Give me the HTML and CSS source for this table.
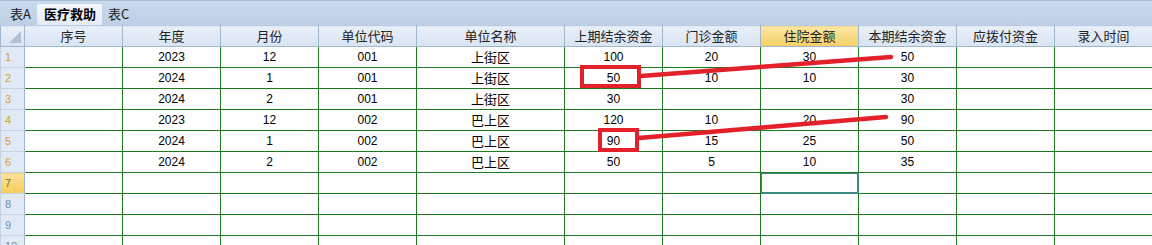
FILE: index.html
```html
<!DOCTYPE html>
<html lang="zh">
<head>
<meta charset="utf-8">
<link rel="stylesheet" href="styles.css">
</head>
<body>
<div class="sheet">
  <div class="tabs">
    <span class="tab">表A</span>
    <span class="tab active">医疗救助</span>
    <span class="tab">表C</span>
  </div>
  <table class="grid">
    <colgroup>
      <col class="c-rh"><col class="c-n"><col class="c-n"><col class="c-n"><col class="c-n"><col class="c-w"><col class="c-n"><col class="c-n"><col class="c-n"><col class="c-n"><col class="c-n"><col class="c-n">
    </colgroup>
    <thead>
      <tr>
        <th class="corner"><span class="tri"></span></th>
        <th>序号</th><th>年度</th><th>月份</th><th>单位代码</th><th>单位名称</th><th>上期结余资金</th><th>门诊金额</th><th class="hl">住院金额</th><th>本期结余资金</th><th>应拨付资金</th><th>录入时间</th>
      </tr>
    </thead>
    <tbody>
      <tr><td class="rh">1</td><td></td><td>2023</td><td>12</td><td>001</td><td class="cn">上街区</td><td>100</td><td>20</td><td>30</td><td>50</td><td></td><td></td></tr>
      <tr><td class="rh">2</td><td></td><td>2024</td><td>1</td><td>001</td><td class="cn">上街区</td><td>50</td><td>10</td><td>10</td><td>30</td><td></td><td></td></tr>
      <tr><td class="rh">3</td><td></td><td>2024</td><td>2</td><td>001</td><td class="cn">上街区</td><td>30</td><td></td><td></td><td>30</td><td></td><td></td></tr>
      <tr><td class="rh">4</td><td></td><td>2023</td><td>12</td><td>002</td><td class="cn">巴上区</td><td>120</td><td>10</td><td>20</td><td>90</td><td></td><td></td></tr>
      <tr><td class="rh">5</td><td></td><td>2024</td><td>1</td><td>002</td><td class="cn">巴上区</td><td>90</td><td>15</td><td>25</td><td>50</td><td></td><td></td></tr>
      <tr><td class="rh">6</td><td></td><td>2024</td><td>2</td><td>002</td><td class="cn">巴上区</td><td>50</td><td>5</td><td>10</td><td>35</td><td></td><td></td></tr>
      <tr><td class="rh rh-sel">7</td><td></td><td></td><td></td><td></td><td></td><td></td><td></td><td class="sel"></td><td></td><td></td><td></td></tr>
      <tr><td class="rh rh-blue">8</td><td></td><td></td><td></td><td></td><td></td><td></td><td></td><td></td><td></td><td></td><td></td></tr>
      <tr><td class="rh rh-blue">9</td><td></td><td></td><td></td><td></td><td></td><td></td><td></td><td></td><td></td><td></td><td></td></tr>
      <tr><td class="rh rh-blue">10</td><td></td><td></td><td></td><td></td><td></td><td></td><td></td><td></td><td></td><td></td><td></td></tr>
    </tbody>
  </table>
  <svg class="marks" width="1152" height="245" viewBox="0 0 1152 245">
    <rect x="582" y="67" width="57" height="19" fill="none" stroke="#e3212b" stroke-width="4"/>
    <line x1="641" y1="76" x2="891" y2="57" stroke="#e3212b" stroke-width="4.5" stroke-linecap="round"/>
    <rect x="600" y="130" width="37" height="20" fill="none" stroke="#e3212b" stroke-width="4"/>
    <line x1="639" y1="138" x2="886" y2="117" stroke="#e3212b" stroke-width="4.5" stroke-linecap="round"/>
  </svg>
</div>
</body>
</html>
```
FILE: styles.css
```css
html, body {
  margin: 0;
  padding: 0;
  background: #ffffff;
}
.sheet {
  position: relative;
  width: 1152px;
  height: 245px;
  overflow: hidden;
  font-family: "Liberation Sans", "Noto Sans CJK SC", sans-serif;
  font-size: 12px;
  color: #000;
}
.tabs {
  height: 25px;
  box-sizing: border-box;
  background: linear-gradient(#c9d9ec, #bfd0e6);
  border-top: 1px solid #a7bcd8;
  display: flex;
  align-items: flex-end;
  padding-left: 4px;
}
.tab {
  font-family: "Noto Sans CJK SC", sans-serif;
  font-size: 13px;
  height: 21px;
  line-height: 20px;
  padding: 0 6px;
  color: #1b1b1b;
}
.tab.active {
  background: linear-gradient(#f4f8fd, #e3ecf7);
  font-weight: bold;
  padding: 0 6px 0 7px;
  border-radius: 2px 2px 0 0;
  color: #000;
}
.grid {
  border-collapse: collapse;
  table-layout: fixed;
  width: 1152px;
}
.c-rh { width: 24px; }
.c-n { width: 98px; }
.c-w { width: 148px; }
.grid th {
  height: 20px;
  padding: 0;
  font-family: "Noto Sans CJK SC", sans-serif;
  font-weight: normal;
  font-size: 13px;
  color: #222;
  background: linear-gradient(#e8eff8, #d9e5f3);
  border: 1px solid #9fb6cf;
  border-top: 1px solid #b9cbe0;
  text-align: center;
  line-height: 20px;
}
.grid th.hl {
  background: linear-gradient(#fbe6a6, #f6cf62);
}
.grid th.corner {
  position: relative;
  border-right: 1px solid #9fb6cf;
}
.tri {
  position: absolute;
  right: 3px;
  bottom: 3px;
  width: 0;
  height: 0;
  border-left: 12px solid transparent;
  border-bottom: 12px solid #b3c2d3;
}
.grid td {
  height: 20px;
  padding: 0;
  border: 1px solid #1d7a1d;
  text-align: center;
  line-height: 20px;
  white-space: nowrap;
  overflow: hidden;
}
.grid td.cn {
  font-family: "Noto Sans CJK SC", sans-serif;
  font-size: 13px;
}
.grid td.rh {
  background: #e1e9f4;
  border: 1px solid #c3d2e4;
  border-right: 1px solid #9fb6cf;
  color: #d7a12b;
  text-align: left;
  padding-left: 4px;
  font-size: 11px;
}
.grid td.rh-sel {
  background: linear-gradient(#fbe29a, #f6cc5b);
  color: #7b6a40;
}
.grid td.rh-blue {
  color: #6b8fb3;
}
.grid td.sel {
  box-shadow: inset 0 0 0 1px #3a8a80;
  border: 1px solid #3a8a80;
}
.marks {
  position: absolute;
  left: 0;
  top: 0;
  pointer-events: none;
}
```
